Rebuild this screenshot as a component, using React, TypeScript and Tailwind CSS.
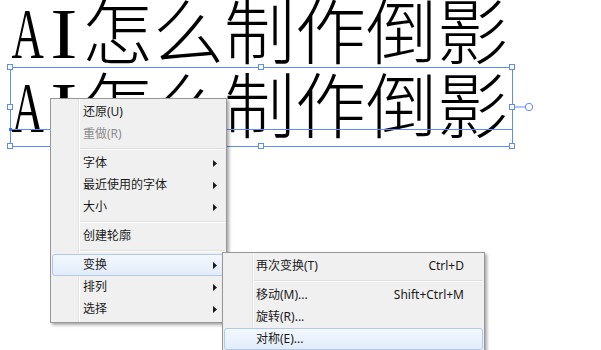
import React from "react";

type Item =
  | { kind: "item"; label: string; disabled?: boolean; arrow?: boolean; shortcut?: string; active?: boolean }
  | { kind: "sep" };

const mainItems: Item[] = [
  { kind: "item", label: "还原(U)" },
  { kind: "item", label: "重做(R)", disabled: true },
  { kind: "sep" },
  { kind: "item", label: "字体", arrow: true },
  { kind: "item", label: "最近使用的字体", arrow: true },
  { kind: "item", label: "大小", arrow: true },
  { kind: "sep" },
  { kind: "item", label: "创建轮廓" },
  { kind: "sep" },
  { kind: "item", label: "变换", arrow: true, active: true },
  { kind: "item", label: "排列", arrow: true },
  { kind: "item", label: "选择", arrow: true },
];

const subItems: Item[] = [
  { kind: "item", label: "再次变换(T)", shortcut: "Ctrl+D" },
  { kind: "sep" },
  { kind: "item", label: "移动(M)...", shortcut: "Shift+Ctrl+M" },
  { kind: "item", label: "旋转(R)..." },
  { kind: "item", label: "对称(E)...", active: true },
];

function Arrow() {
  return (
    <svg width="4" height="7" viewBox="0 0 4 7" className="block">
      <path d="M0 0L4 3.5L0 7Z" fill="#1a1a1a" />
    </svg>
  );
}

function MenuRow({ item, sub }: { item: Item; sub?: boolean }) {
  if (item.kind === "sep") {
    return (
      <div className={sub ? "h-[7px] pt-[3px] pl-[29px]" : "h-[7px] pt-[3px] pl-[27px]"}>
        <div className="h-px bg-[#e0e0e0]" />
        <div className="h-px bg-white" />
      </div>
    );
  }
  const base = "relative flex items-center h-[22px] rounded-[3px] border";
  const active = item.active
    ? " border-[#aecbef] bg-gradient-to-b from-[#f3f8fe] to-[#e2ecfa]"
    : " border-transparent";
  const pad = sub ? " pl-[31px] pr-[18px]" : " pl-[30px] pr-[7px]";
  return (
    <div className={base + active + pad}>
      <span className={item.disabled ? "text-[#8d8d8d]" : "text-[#1a1a1a]"}>{item.label}</span>
      <span className="flex-1" />
      {item.shortcut ? <span className="text-[#1a1a1a]">{item.shortcut}</span> : null}
      {item.arrow ? <Arrow /> : null}
    </div>
  );
}

function Handle({ className }: { className: string }) {
  return <div className={"absolute w-[6px] h-[6px] bg-white border border-[#5f8bf5] " + className} />;
}

export default function App() {
  return (
    <div className="relative w-[601px] h-[350px] overflow-hidden bg-white">
      {/* Big text lines */}
      <div className="mt-[-10px] pl-[10px] text-black">
        {[0, 1].map((i) => (
          <div key={i} className="flex items-baseline h-[74px] leading-[74px] text-[71px] whitespace-nowrap">
            <span className="flex justify-center w-[36px] font-['Liberation_Serif',serif]">
              <span className="inline-block scale-x-[0.63]">A</span>
            </span>
            <span className="flex justify-center w-[36px] font-['Liberation_Serif',serif]">
              <span className="inline-block scale-x-[1.15]">I</span>
            </span>
            <span className="font-['Noto_Sans_CJK_SC',sans-serif] font-light">怎么制作倒影</span>
          </div>
        ))}
      </div>

      {/* Selection box */}
      <div className="absolute left-[10px] top-[67px] w-[503px] h-[80px] border border-[#5f8bf5]">
        <div className="absolute left-0 right-0 top-[61px] h-px bg-[#5f8bf5]" />
      </div>
      <div className="absolute left-[9px] top-[128px] w-[3px] h-[3px] bg-[#3f6ff0]" />
      <Handle className="left-[7px] top-[64px]" />
      <Handle className="left-[258px] top-[64px]" />
      <Handle className="left-[509px] top-[64px]" />
      <Handle className="left-[7px] top-[104px]" />
      <Handle className="left-[509px] top-[104px]" />
      <Handle className="left-[7px] top-[143px]" />
      <Handle className="left-[258px] top-[143px]" />
      <Handle className="left-[509px] top-[143px]" />
      <svg className="absolute left-[514px] top-[100px]" width="22" height="14" viewBox="0 0 22 14">
        <line x1="0" y1="7" x2="11" y2="7" stroke="#5f8bf5" strokeWidth="1" />
        <circle cx="15" cy="7" r="3.7" fill="white" stroke="#5f8bf5" strokeWidth="1" />
      </svg>

      {/* Context menu */}
      <div className="absolute left-[50px] top-[98px] w-[177px] border border-[#979797] bg-[#f0f0f0] px-px pt-[2px] pb-[2px] shadow-[2px_2px_3px_rgba(0,0,0,0.35)] font-['Noto_Sans','Noto_Sans_CJK_SC',sans-serif] text-[12px]">
        <div className="absolute top-0 bottom-0 left-[27px] w-px bg-[#e2e3e3]" />
        <div className="absolute top-0 bottom-0 left-[28px] w-px bg-white" />
        {mainItems.map((it, i) => (
          <MenuRow key={i} item={it} />
        ))}
      </div>

      {/* Submenu */}
      <div className="absolute left-[222px] top-[252px] w-[263px] h-[120px] border border-[#979797] bg-[#f0f0f0] px-px pt-[2px] shadow-[2px_2px_3px_rgba(0,0,0,0.35)] font-['Noto_Sans','Noto_Sans_CJK_SC',sans-serif] text-[12px]">
        <div className="absolute top-0 bottom-0 left-[29px] w-px bg-[#e2e3e3]" />
        <div className="absolute top-0 bottom-0 left-[30px] w-px bg-white" />
        {subItems.map((it, i) => (
          <MenuRow key={i} item={it} sub />
        ))}
      </div>
    </div>
  );
}
